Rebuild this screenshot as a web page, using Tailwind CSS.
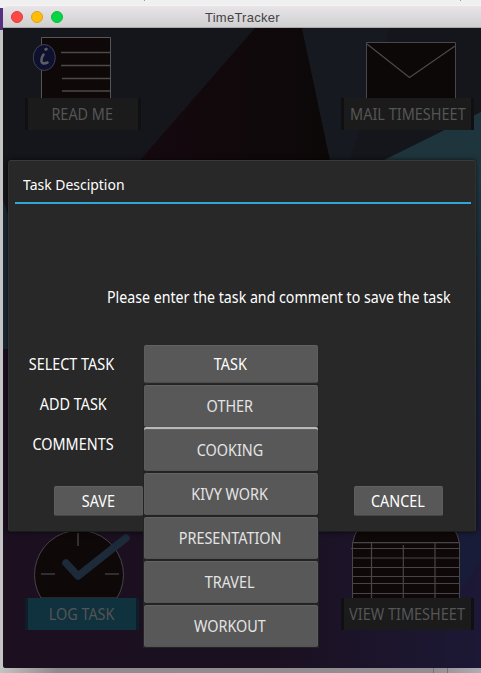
<!DOCTYPE html>
<html lang="en">
<head>
<meta charset="utf-8">
<title>TimeTracker</title>
<script src="https://cdn.jsdelivr.net/npm/@tailwindcss/browser@4"></script>
</head>
<body class="relative h-[673px] w-[481px] overflow-hidden bg-[#c4c4c4] font-['Noto_Sans','Open_Sans',sans-serif] text-[16px] leading-[22px] [&_span]:whitespace-nowrap">
  <!-- Desktop behind the window -->
  <svg class="absolute inset-0" width="481" height="673">
    <defs><linearGradient id="floor"><stop offset="0" stop-color="#c4c2c3"/><stop offset=".12" stop-color="#8f8a8d"/><stop offset=".9" stop-color="#928e91"/><stop offset="1" stop-color="#b0adb0"/></linearGradient></defs>
    <rect width="481" height="8" fill="#f0f0f0"/>
    <rect x="144" width="1" height="1" fill="#999"/><rect x="460" width="1" height="1" fill="#999"/>
    <rect y="8" width="3" height="22" fill="#553080"/>
    <rect y="667" width="481" height="6" fill="url(#floor)"/>
    <path d="M433.500 668v5M447.500 668v5" stroke="#777377"/>
  </svg>

  <main class="relative flex h-full flex-col pl-[3px] pt-[5px] pb-[5px]">
    <header class="relative flex h-[23px] shrink-0 items-center gap-2 rounded-tl-[5px] border-t border-b border-t-[#f5f3f5] border-b-[#aaa] bg-linear-to-b from-[#e8e4e8] to-[#d0d0d0] pl-2">
      <span class="size-3 rounded-full border border-[#e0383b] bg-[#ff4845]"></span>
      <span class="size-3 rounded-full border border-[#dfa022] bg-[#ffbd05]"></span>
      <span class="size-3 rounded-full border border-[#12b53c] bg-[#00d742]"></span>
      <h1 class="ml-[134px] pt-[2px] font-['Liberation_Sans',sans-serif] text-[13px] leading-none tracking-[0.25px] text-[#454345]">TimeTracker</h1>
    </header>

    <section class="relative flex-1 overflow-hidden rounded-bl-[3px] bg-[#15161b]">
      <svg class="absolute inset-0" width="478" height="640" viewBox="3 28 478 640">
        <defs>
          <linearGradient id="wine"><stop offset="0" stop-color="#15090f"/><stop offset="1" stop-color="#0c0808"/></linearGradient>
          <linearGradient id="night"><stop offset="0" stop-color="#1b0f20"/><stop offset=".55" stop-color="#1b1020"/><stop offset="1" stop-color="#1c1835"/></linearGradient>
          <linearGradient id="edge" x2="0" y2="1"><stop offset="0" stop-color="#203a42"/><stop offset=".5" stop-color="#182434"/><stop offset="1" stop-color="#1a1834"/></linearGradient>
        </defs>
        <path d="M255 28H302L330 160H140Z" fill="url(#wine)"/>
        <path d="M302 28H390L350 160H330Z" fill="#171920"/>
        <path d="M380 162L481 112V200H380Z" fill="#1f353d"/>
        <rect x="3" y="349" width="478" height="319" fill="url(#night)"/>
        <path d="M3 200L10 220V349H3Z" fill="#1b2830"/>
        <rect x="470" y="162" width="11" height="400" fill="url(#edge)"/>
        <path d="M440 532H481V560L460 590Z" fill="#191c38"/>
      </svg>

      <div class="relative flex h-full flex-col justify-between text-[#555] [&_svg]:block">
        <div class="flex justify-between pl-[22px] pr-[7px]">
          <button class="flex w-[116px] flex-col">
            <svg width="116" height="70" viewBox="25 28 116 70" fill="none">
              <path d="M41.500 98V37.500H110.500V98" fill="#0f0808" stroke="#555"/>
              <path d="M61 52.500H110M61 65.500H110M62 78.500H110M62 91H110" stroke="#4b494a" stroke-width="1.300"/>
              <ellipse cx="44.300" cy="57.500" rx="11" ry="13" fill="#0d102f" stroke="#41434f"/>
              <path d="M45.500 49.500L46.500 49M43.500 54.500C41 58 40.500 63 43.500 63.400C45 63.500 46.500 63 47.500 62.500" stroke="#5c5d61" stroke-width="2.600" stroke-linecap="round"/>
            </svg>
            <span class="flex h-8 w-full items-center justify-center border-x-[3px] border-[#101012] bg-[#1b1b1b] pr-[2px]"><span class="scale-x-90">READ ME</span></span>
          </button>
          <button class="flex w-[133px] flex-col">
            <svg width="133" height="70" viewBox="341 28 133 70" fill="none">
              <path d="M366.500 98V42.500H455.500V98" fill="#0d0808" stroke="#494749"/>
              <path d="M367 44L409.500 77.500L455 46" stroke="#4a484a" stroke-width="1.300"/>
            </svg>
            <span class="flex h-8 w-full items-center justify-center border-x-[3px] border-[#101012] bg-[#1b1b1b]"><span class="scale-x-[.905]">MAIL TIMESHEET</span></span>
          </button>
        </div>
        <div class="flex justify-between pb-[38px] pl-[22px] pr-[7px]">
          <button class="flex w-[116px] flex-col">
            <svg class="overflow-visible" width="116" height="70" viewBox="25 528 116 70" fill="none">
              <path d="M41 598A44.500 44.500 0 1 1 117 598Z" fill="#0f0808" stroke="#464347"/>
              <path d="M78 533V546M41 574H55M105 574H119" stroke="#3d3b3e" stroke-width="1.600"/>
              <path d="M66 563L78 576L126 538" stroke="#1d2a3a" stroke-width="7.500" stroke-linecap="round" stroke-linejoin="round"/>
            </svg>
            <span class="flex h-8 w-[114px] items-center justify-center border-x-[3px] border-[#0d1e28] bg-[#10313e]"><span class="scale-x-90">LOG TASK</span></span>
          </button>
          <button class="flex w-[133px] flex-col">
            <svg width="133" height="70" viewBox="341 528 133 70" fill="none">
              <path d="M352.500 598V543Q354 534 359 528H453Q458 534 459.500 543V598" fill="#0f0808" stroke="#484548"/>
              <path d="M353 542.700H459M351 548.500H459M353 558H459M353 567.500H459M353 576.500H460M353 583.500H459M353 593.500H459M371.500 543V598M403.300 545V598M435 543V598" stroke="#484548" stroke-width="1.200"/>
            </svg>
            <span class="flex h-8 w-full items-center justify-center border-x-[3px] border-[#101012] bg-[#1b1b1b]"><span class="scale-x-[.905]">VIEW TIMESHEET</span></span>
          </button>
        </div>
      </div>
    </section>
  </main>

  <!-- Popup -->
  <section class="absolute left-[8px] top-[160px] flex h-[372px] w-[468px] flex-col rounded-[3px] border border-t-[#3a3a3a] border-x-[#303030] border-b-[#1c1c1c] bg-[#282828] pl-[6px] pr-[4px] text-white shadow-[0_0_5px_#000a]">
    <h2 class="flex h-[43px] items-center border-b-2 border-[#2fa7d9] pt-[5px] pl-2 text-[15px]"><span class="origin-left scale-x-[.93]">Task Desciption</span></h2>
    <p class="mt-[82px] ml-[92px] h-[22px]"><span class="inline-block origin-left scale-x-[.887]">Please enter the task and comment to save the task</span></p>
    <div class="mt-[37px] flex">
      <div class="-mt-px flex w-[129px] flex-col pl-[1px] [&>span]:flex [&>span]:h-10 [&>span]:items-center [&>span]:justify-center">
        <span class="w-[110px]"><span class="scale-x-90">SELECT TASK</span></span>
        <span class="w-[115px]"><span class="scale-x-90">ADD TASK</span></span>
        <span class="w-[114px]"><span class="scale-x-90">COMMENTS</span></span>
      </div>
      <button class="h-[38px] w-[174px] rounded-[2px] border border-t-[#626262] border-x-[#5d5d5d] border-b-[#4a4a4a] bg-[#585858] pr-[2px]"><span class="inline-block scale-x-90">TASK</span></button>
    </div>
    <div class="mt-[22px] flex justify-between pl-[39px] pr-[28px]">
      <button class="h-[30px] w-[89px] rounded-[2px] border border-t-[#626262] border-x-[#5d5d5d] border-b-[#454545] bg-[#585858]"><span class="inline-block scale-x-90">SAVE</span></button>
      <button class="h-[30px] w-[89px] rounded-[2px] border border-t-[#626262] border-x-[#5d5d5d] border-b-[#454545] bg-[#585858] pr-[2px]"><span class="inline-block scale-x-90">CANCEL</span></button>
    </div>
  </section>

  <!-- Open dropdown -->
  <div class="absolute left-[143px] top-[384px] flex h-[264px] w-[176px] flex-col gap-[2px] bg-[#232323] px-px pt-px pb-px text-[#e4e4e4] [&>button]:h-[42px] [&>button]:rounded-[2px] [&>button]:border [&>button]:border-t-[#626262] [&>button]:border-x-[#5d5d5d] [&>button]:border-b-[#545454] [&>button]:bg-[#585858] [&>button]:pr-[2px]">
    <button><span class="inline-block scale-x-90">OTHER</span></button>
    <button class="shadow-[0_-2px_#b9b9b9]"><span class="inline-block scale-x-90">COOKING</span></button>
    <button><span class="inline-block scale-x-90">KIVY WORK</span></button>
    <button><span class="inline-block scale-x-90">PRESENTATION</span></button>
    <button><span class="inline-block scale-x-90">TRAVEL</span></button>
    <button><span class="inline-block scale-x-90">WORKOUT</span></button>
  </div>
</body>
</html>
